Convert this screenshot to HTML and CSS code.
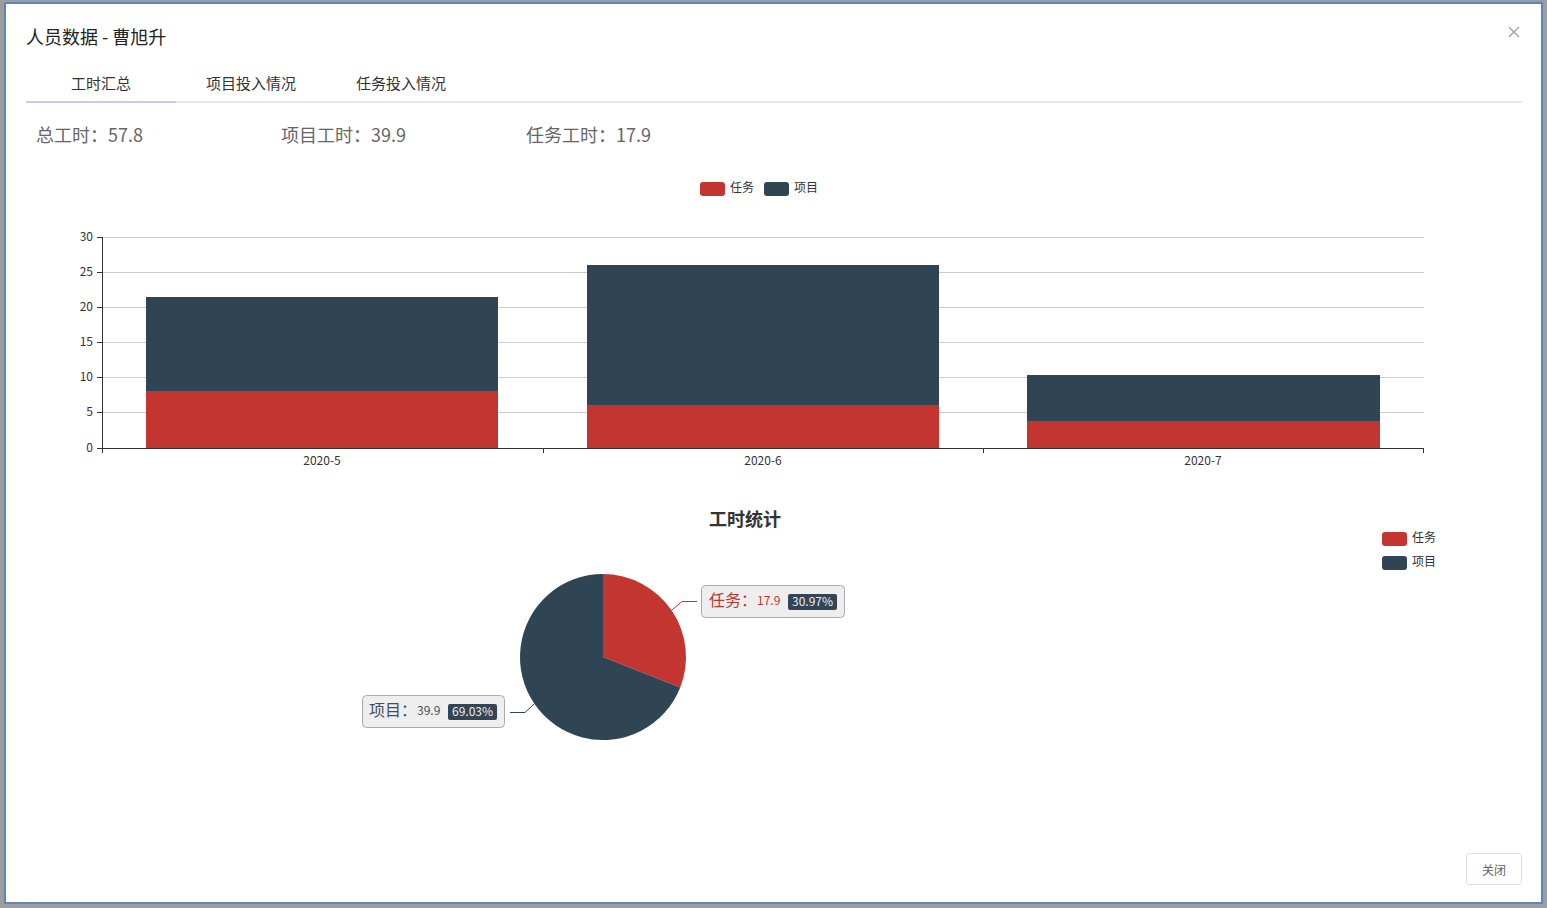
FILE: index.html
```html
<!DOCTYPE html>
<html lang="zh-CN">
<head>
<meta charset="utf-8">
<title>人员数据</title>
<link rel="stylesheet" href="styles.css">
</head>
<body>
<div class="dialog">
  <div class="dialog-header">
    <span class="dialog-title">人员数据 - 曹旭升</span>
    <button class="dialog-close" aria-label="关闭">
      <svg width="12" height="12" viewBox="0 0 12 12"><path d="M1 1 L11 11 M11 1 L1 11" stroke="#9a9a9a" stroke-width="1.2" fill="none"/></svg>
    </button>
  </div>
  <div class="tabs">
    <div class="tab active">工时汇总</div>
    <div class="tab">项目投入情况</div>
    <div class="tab">任务投入情况</div>
  </div>
  <div class="summary">
    <div class="summary-item">总工时：57.8</div>
    <div class="summary-item">项目工时：39.9</div>
    <div class="summary-item">任务工时：17.9</div>
  </div>

  <svg class="chart bar-chart" width="1496" height="333" viewBox="0 0 1496 333">
    <g transform="translate(-26 -147)" font-family="'Noto Sans CJK SC', 'Noto Sans', sans-serif">
      <!-- legend -->
      <rect x="700" y="182" width="25" height="14" rx="3" fill="#c23531"/>
      <text x="730" y="192" font-size="12" fill="#333">任务</text>
      <rect x="764" y="182" width="25" height="14" rx="3" fill="#2f4554"/>
      <text x="794" y="192" font-size="12" fill="#333">项目</text>

      <!-- grid -->
      <g stroke="#ccc" stroke-width="1">
        <line x1="102" y1="237.5" x2="1424" y2="237.5"/>
        <line x1="102" y1="272.5" x2="1424" y2="272.5"/>
        <line x1="102" y1="307.5" x2="1424" y2="307.5"/>
        <line x1="102" y1="342.5" x2="1424" y2="342.5"/>
        <line x1="102" y1="377.5" x2="1424" y2="377.5"/>
        <line x1="102" y1="412.5" x2="1424" y2="412.5"/>
      </g>

      <!-- bars -->
      <rect x="146" y="297" width="352" height="94" fill="#2f4554"/>
      <rect x="146" y="391" width="352" height="57" fill="#c23531"/>
      <rect x="587" y="265" width="352" height="140" fill="#2f4554"/>
      <rect x="587" y="405" width="352" height="43" fill="#c23531"/>
      <rect x="1027" y="375" width="353" height="46" fill="#2f4554"/>
      <rect x="1027" y="421" width="353" height="27" fill="#c23531"/>

      <!-- axes -->
      <g stroke="#333" stroke-width="1">
        <line x1="102.5" y1="237" x2="102.5" y2="448"/>
        <line x1="97" y1="237.5" x2="102" y2="237.5"/>
        <line x1="97" y1="272.5" x2="102" y2="272.5"/>
        <line x1="97" y1="307.5" x2="102" y2="307.5"/>
        <line x1="97" y1="342.5" x2="102" y2="342.5"/>
        <line x1="97" y1="377.5" x2="102" y2="377.5"/>
        <line x1="97" y1="412.5" x2="102" y2="412.5"/>
        <line x1="97" y1="448.5" x2="102" y2="448.5"/>
        <line x1="102" y1="448.5" x2="1424" y2="448.5"/>
        <line x1="102.5" y1="448" x2="102.5" y2="453"/>
        <line x1="543.5" y1="448" x2="543.5" y2="453"/>
        <line x1="983.5" y1="448" x2="983.5" y2="453"/>
        <line x1="1423.5" y1="448" x2="1423.5" y2="453"/>
      </g>
      <g font-size="12" fill="#333" text-anchor="end">
        <text x="93" y="241">30</text>
        <text x="93" y="276">25</text>
        <text x="93" y="311">20</text>
        <text x="93" y="346">15</text>
        <text x="93" y="381">10</text>
        <text x="93" y="416">5</text>
        <text x="93" y="452">0</text>
      </g>
      <g font-size="12" fill="#333" text-anchor="middle">
        <text x="322" y="465">2020-5</text>
        <text x="763" y="465">2020-6</text>
        <text x="1203" y="465">2020-7</text>
      </g>
    </g>
  </svg>

  <svg class="chart pie-chart" width="1496" height="300" viewBox="0 0 1496 300">
    <g transform="translate(-26 -480)" font-family="'Noto Sans CJK SC', 'Noto Sans', sans-serif">
      <text x="745" y="526" font-size="18" font-weight="bold" fill="#333" text-anchor="middle">工时统计</text>

      <rect x="1382" y="532" width="25" height="14" rx="3" fill="#c23531"/>
      <text x="1412" y="542" font-size="12" fill="#333">任务</text>
      <rect x="1382" y="556" width="25" height="14" rx="3" fill="#2f4554"/>
      <text x="1412" y="566" font-size="12" fill="#333">项目</text>

      <path d="M603 657 L603 574 A83 83 0 0 1 680.23 687.4 Z" fill="#c23531"/>
      <path d="M603 657 L680.23 687.4 A83 83 0 1 1 603 574 Z" fill="#2f4554"/>

      <polyline points="671.6,610.2 682,601.5 697,601.5" fill="none" stroke="#c23531" stroke-width="1"/>
      <polyline points="534.4,703.7 525,712.5 510,712.5" fill="none" stroke="#2f4554" stroke-width="1"/>

      <rect x="701.5" y="585.5" width="143" height="32" rx="4" fill="#eee" stroke="#aaa"/>
      <text x="709" y="606" font-size="16" fill="#c23531">任务：</text>
      <text x="757" y="605" font-size="12" fill="#c23531">17.9</text>
      <rect x="788" y="594" width="49" height="16" rx="2" fill="#334455"/>
      <text x="812.5" y="606" font-size="12" fill="#eee" text-anchor="middle">30.97%</text>

      <rect x="362.5" y="695.5" width="142" height="32" rx="4" fill="#eee" stroke="#aaa"/>
      <text x="369" y="716" font-size="16" fill="#3f4f5b">项目：</text>
      <text x="417" y="715" font-size="12" fill="#3f4f5b">39.9</text>
      <rect x="448" y="704" width="49" height="16" rx="2" fill="#334455"/>
      <text x="472.5" y="716" font-size="12" fill="#eee" text-anchor="middle">69.03%</text>
    </g>
  </svg>

  <div class="dialog-footer">
    <button class="btn">关闭</button>
  </div>
</div>
</body>
</html>
```

FILE: styles.css
```css
* {
  box-sizing: border-box;
}

html, body {
  margin: 0;
  padding: 0;
  width: 1547px;
  height: 908px;
  overflow: hidden;
  background: #9d9d9d;
  font-family: "Noto Sans CJK SC", "Noto Sans", sans-serif;
}

.dialog {
  position: relative;
  width: 1539px;
  height: 902px;
  margin: 2px 0 0 4px;
  background: #fff;
  border: 2px solid #5a87c2;
  padding: 20px 19px 17px 20px;
  display: flex;
  flex-direction: column;
}

.dialog-header {
  height: 24px;
  display: flex;
  align-items: center;
}

.dialog-title {
  font-size: 18px;
  line-height: 24px;
  color: #222;
  font-weight: 400;
}

.dialog-close {
  position: absolute;
  top: 21px;
  right: 20px;
  width: 14px;
  height: 14px;
  padding: 0;
  border: none;
  background: transparent;
  display: flex;
  align-items: center;
  justify-content: center;
}

.tabs {
  margin-top: 15px;
  display: flex;
  border-bottom: 2px solid #e4e7ed;
}

.tab {
  width: 150px;
  height: 40px;
  line-height: 40px;
  text-align: center;
  font-size: 15px;
  color: #333;
  margin-bottom: -2px;
  border-bottom: 2px solid transparent;
}

.tab.active {
  border-bottom-color: #c5d0e3;
}

.summary {
  margin-top: 20px;
  padding-left: 10px;
  display: flex;
  height: 24px;
}

.summary-item {
  width: 245px;
  font-size: 18px;
  line-height: 22px;
  color: #666;
}

.chart {
  display: block;
}

.dialog-footer {
  margin-top: auto;
  display: flex;
  justify-content: flex-end;
}

.btn {
  width: 56px;
  height: 32px;
  border: 1px solid #dcdfe6;
  border-radius: 3px;
  background: #fff;
  color: #606266;
  font-size: 12px;
  font-family: "Noto Sans CJK SC", sans-serif;
  padding: 0;
  margin-right: 0;
}
```
